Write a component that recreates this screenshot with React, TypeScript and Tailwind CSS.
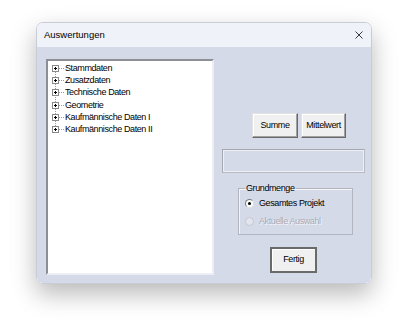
import React from 'react';

const items = [
  'Stammdaten',
  'Zusatzdaten',
  'Technische Daten',
  'Geometrie',
  'Kaufmännische Daten I',
  'Kaufmännische Daten II',
];

function PlusBox() {
  return (
    <span className="relative flex h-[7px] w-[7px] shrink-0 items-center justify-center border border-[#8a8a8a] bg-white">
      <span className="absolute h-px w-[3px] bg-black" />
      <span className="absolute h-[3px] w-px bg-black" />
    </span>
  );
}

function TreeRow({ label, last }: { label: string; last: boolean }) {
  return (
    <div className="relative flex h-[12.3px] items-center pl-[4px]">
      <PlusBox />
      <span className="h-0 w-[5px] border-t border-dotted border-[#9a9a9a]" />
      <span className="pl-[1px] leading-none">{label}</span>
      {!last && (
        <span className="absolute left-[7px] top-[10px] h-[5px] border-l border-dotted border-[#9a9a9a]" />
      )}
    </div>
  );
}

function WinButton({ label, width, isDefault = false }: { label: string; width: string; isDefault?: boolean }) {
  return (
    <button
      className={`flex items-center justify-center bg-[#f0f0f0] text-black ${width} ${
        isDefault
          ? 'h-[26px] border-2 border-[#6a6a6a] shadow-[inset_1px_1px_0_#ffffff]'
          : 'h-[25px] border border-t-[#e3e3e3] border-l-[#e3e3e3] border-r-[#696969] border-b-[#696969] shadow-[inset_-1px_-1px_0_#a0a0a0,inset_1px_1px_0_#ffffff]'
      }`}
    >
      {label}
    </button>
  );
}

function Radio({ checked, disabled }: { checked?: boolean; disabled?: boolean }) {
  return (
    <span
      className={`flex h-[9px] w-[9px] shrink-0 items-center justify-center rounded-full border ${
        disabled
          ? 'border-[#c4c7d0] bg-[#e2e5ee]'
          : 'border-t-[#7a7a7a] border-l-[#7a7a7a] border-r-[#e0e0e0] border-b-[#e0e0e0] bg-white'
      }`}
    >
      {checked && <span className="h-[3px] w-[3px] rounded-full bg-black" />}
    </span>
  );
}

export default function App() {
  return (
    <div
      className="h-[333px] w-[400px] bg-white pl-[36px] pt-[22px] text-[9px] tracking-[-0.4px] text-black"
      style={{ fontFamily: '"Liberation Sans", Arial, sans-serif' }}
    >
      <div className="flex h-[262px] w-[336px] flex-col overflow-hidden rounded-[7px] border border-[#c9ccd4] shadow-[0_10px_24px_rgba(0,0,0,0.28)]">
        {/* title bar */}
        <div className="flex h-[24px] shrink-0 items-center justify-between bg-[#eff2f9] pl-[7px] pr-[8px]">
          <span className="text-[9.5px] tracking-normal">Auswertungen</span>
          <svg width="8" height="8" viewBox="0 0 8 8">
            <path d="M0.5 0.5L7.5 7.5M7.5 0.5L0.5 7.5" stroke="#3a3a3a" strokeWidth="1" />
          </svg>
        </div>

        {/* body */}
        <div className="flex flex-1 bg-[#d5dae9]">
          <div className="ml-[9px] mt-[12px] h-[216px] w-[168px] border-2 border-t-[#8c8f96] border-l-[#8c8f96] border-r-[#eceef4] border-b-[#eceef4] bg-white pt-[1px]">
            {items.map((it, i) => (
              <TreeRow key={it} label={it} last={i === items.length - 1} />
            ))}
          </div>

          <div className="flex flex-col">
            <div className="ml-[38px] mt-[66px] flex gap-[3px]">
              <WinButton label="Summe" width="w-[46px]" />
              <WinButton label="Mittelwert" width="w-[45px]" />
            </div>

            <div className="ml-[8px] mt-[11px] h-[24px] w-[143px] border border-t-[#a4a7b0] border-l-[#a4a7b0] border-r-[#b8bbc4] border-b-[#b8bbc4] shadow-[inset_-1px_-1px_0_#eef0f6,inset_1px_1px_0_#eef0f6]" />

            <fieldset className="ml-[24px] mt-[11px] h-[51px] w-[115px] border border-[#b2b5c0] px-[6px] pb-0 pt-0 shadow-[inset_1px_1px_0_#f3f4f8]">
              <legend className="ml-[0px] px-[1px] leading-none">Grundmenge</legend>
              <div className="mt-[6px] flex items-center gap-[5px]">
                <Radio checked />
                <span className="leading-none">Gesamtes Projekt</span>
              </div>
              <div className="mt-[9px] flex items-center gap-[5px]">
                <Radio disabled />
                <span className="leading-none text-[#a9acb6] [text-shadow:1px_1px_0_#f4f5f9]">Aktuelle Auswahl</span>
              </div>
            </fieldset>

            <div className="ml-[56px] mt-[12px]">
              <WinButton label="Fertig" width="w-[47px]" isDefault />
            </div>
          </div>
        </div>
      </div>
    </div>
  );
}
